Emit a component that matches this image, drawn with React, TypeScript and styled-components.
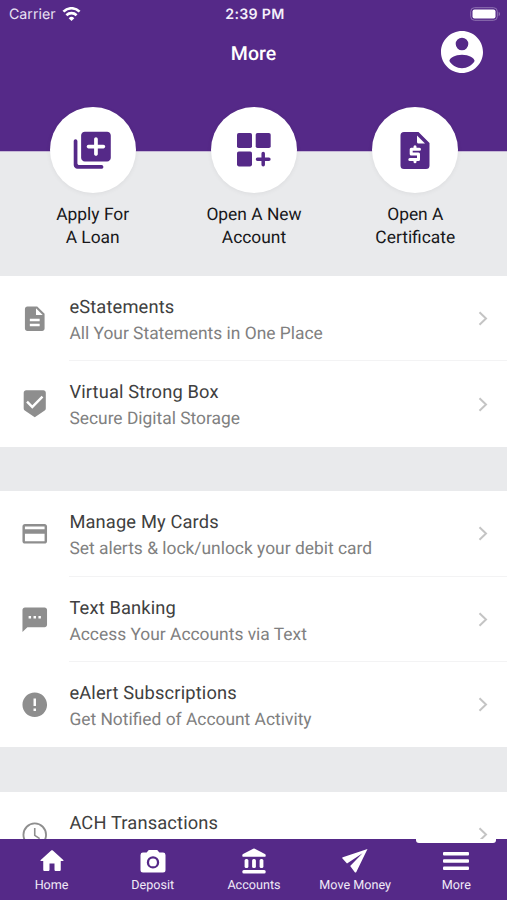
import React from "react";
import styled, { createGlobalStyle } from "styled-components";

const purple = "#552988";
const Global = createGlobalStyle`
  *{box-sizing:border-box}
  body{margin:0;background:#e9eaec;font-family:Roboto,sans-serif;overflow:hidden;text-rendering:geometricPrecision}
`;
const Screen = styled.div`
  width:507px;height:900px;display:flex;flex-direction:column;overflow:hidden;background:#e9eaec;
`;
const Top = styled.header`
  height:276px;flex:none;background:linear-gradient(${purple} 151px,#c6b8d6 151px,#c6b8d6 152px,#e9eaec 152px);display:flex;flex-direction:column;
`;
const StatusBar = styled.div`
  height:27px;display:grid;grid-template-columns:1fr auto 1fr;align-items:center;padding:0 6px 0 9px;
  font-family:Inter,sans-serif;font-size:14.2px;color:#e9e1f3;
`;
const Carrier = styled.div`display:flex;align-items:center;gap:6px;margin-top:1px;`;
const Clock = styled.div`font-weight:600;letter-spacing:.3px;color:#f4effa;margin-top:1px;`;
const Battery = styled.div`display:flex;justify-content:flex-end;`;
const NavBar = styled.div`
  height:50px;display:grid;grid-template-columns:1fr auto 1fr;align-items:center;padding:0 24px;
`;
const NavTitle = styled.h1`
  grid-column:2;margin:2px 0 0;font-size:19.5px;font-weight:500;color:#fff;
`;
const Profile = styled.div`display:flex;justify-content:flex-end;`;
const Quick = styled.div`
  display:grid;grid-template-columns:repeat(3,161.3px);justify-content:center;padding:30px 0 0 1px;
`;
const QuickItem = styled.div`display:flex;flex-direction:column;align-items:center;`;
const Circle = styled.div`
  width:86px;height:86px;border-radius:50%;background:#fff;display:grid;place-items:center;
  box-shadow:0 1px 5px rgba(0,0,0,.06);
`;
const QuickLabel = styled.div`
  margin-top:11px;font-size:17.4px;line-height:22.5px;text-align:center;color:#17171a;white-space:pre-line;
`;
const Group = styled.section`
  flex:none;background:#fff;margin-bottom:44.5px;
`;
const Row = styled.div`
  height:85.4px;display:grid;grid-template-columns:69.4px 1fr 38px;align-items:center;
`;
const RowIcon = styled.div`display:grid;place-items:center;height:85px;color:#8e8e8e;`;
const RowText = styled.div<{ $line: boolean }>`
  height:100%;padding-top:19px;margin-right:-38px;
  border-bottom:${p => (p.$line ? "1px solid #f3f3f4" : "0")};
`;
const RowTitle = styled.div`
  font-size:18.3px;line-height:26px;letter-spacing:.15px;color:#404040;white-space:nowrap;
`;
const RowSub = styled.div`
  font-size:17.4px;line-height:26px;color:#808080;white-space:nowrap;
`;
const Chevron = styled.div`display:flex;justify-content:flex-start;padding-left:9px;`;
const ListArea = styled.main`height:563px;flex:none;overflow:hidden;display:flex;flex-direction:column;`;
const Tabs = styled.nav`
  height:61px;flex:none;background:${purple};display:grid;grid-template-columns:repeat(5,101.2px);padding-left:1px;color:#fff;
`;
const Tab = styled.div<{ $active?: boolean }>`
  display:flex;flex-direction:column;align-items:center;padding-top:7px;position:relative;
  ${p => p.$active && `&::before{content:"";position:absolute;top:0;left:10.5px;width:80px;height:3.5px;background:#fff;border-radius:0 0 3px 3px;}`}
`;
const TabIcon = styled.div`height:30px;display:grid;place-items:center;`;
const TabLabel = styled.div`font-size:12.6px;line-height:19px;color:#f1eaf8;`;

const Icon = ({ d, size, children }: { d?: string; size: number; children?: React.ReactNode }) => (
  <svg width={size} height={size} viewBox="0 0 24 24" fill="currentColor">
    {d && <path d={d} fillRule="evenodd" />}
    {children}
  </svg>
);

const paths = {
  account: "M12 2C6.48 2 2 6.48 2 12s4.48 10 10 10 10-4.48 10-10S17.52 2 12 2zm0 3.2a3 3 0 1 1 0 6 3 3 0 0 1 0-6zm0 8.1c3.3 0 6 1.6 6 3-1.3 2.2-3.5 3.4-6 3.4s-4.7-1.2-6-3.4c0-1.4 2.7-3 6-3z",
  libraryAdd: "M3 6c-.55 0-1 .45-1 1v13c0 1.1.9 2 2 2h13c.55 0 1-.45 1-1s-.45-1-1-1H5c-.55 0-1-.45-1-1V7c0-.55-.45-1-1-1zM20 2H8c-1.1 0-2 .9-2 2v12c0 1.1.9 2 2 2h12c1.1 0 2-.9 2-2V4c0-1.1-.9-2-2-2zM18 11h-3v3c0 .55-.45 1-1 1s-1-.45-1-1v-3h-3c-.55 0-1-.45-1-1s.45-1 1-1h3V6c0-.55.45-1 1-1s1 .45 1 1v3h3c.55 0 1 .45 1 1s-.45 1-1 1z",
  doc: "M14 2H6c-1.1 0-1.99.9-1.99 2L4 20c0 1.1.89 2 1.99 2H18c1.1 0 2-.9 2-2V8l-6-6zm2 16H8v-2h8v2zm0-4H8v-2h8v2zm-3-5V3.5L18.5 9H13z",
  shield: "M19 1H5c-1.1 0-1.99.9-1.99 2L3 15.93c0 .69.35 1.3.88 1.66L12 23l8.11-5.41c.53-.36.88-.97.88-1.66L21 3c0-1.1-.9-2-2-2zm-9 15l-5-5 1.41-1.41L10 13.17l7.59-7.59L19 7l-9 9z",
  card: "M20 4H4c-1.11 0-1.99.89-1.99 2L2 18c0 1.11.89 2 2 2h16c1.11 0 2-.89 2-2V6c0-1.11-.89-2-2-2zm0 14H4v-6h16v6zm0-9.7H4V6h16v2.3z",
  sms: "M20 2H4c-1.1 0-1.99.9-1.99 2L2 22l4-4h14c1.1 0 2-.9 2-2V4c0-1.1-.9-2-2-2zM9 11H7V9h2v2zm4 0h-2V9h2v2zm4 0h-2V9h2v2z",
  alert: "M12 2C6.48 2 2 6.48 2 12s4.48 10 10 10 10-4.48 10-10S17.52 2 12 2zm1 15h-2v-2h2v2zm0-4h-2V7h2v6z",
  home: "M10 19v-5h4v5c0 .55.45 1 1 1h3c.55 0 1-.45 1-1v-7h1.7c.46 0 .68-.57.33-.87L12.67 3.6c-.38-.34-.96-.34-1.34 0l-8.36 7.53c-.34.3-.13.87.33.87H5v7c0 .55.45 1 1 1h3c.55 0 1-.45 1-1z",
};

const AddWidget = () => (
  <svg width="34" height="34" viewBox="0 0 34 34" fill={purple}>
    <rect x="0" y="0" width="15" height="15" rx="1.8" />
    <rect x="18.7" y="0" width="15" height="15" rx="1.8" />
    <rect x="0" y="18.4" width="15" height="15" rx="1.8" />
    <path d="M26.2 20.5v11.3M20.5 26.2h11.4" stroke={purple} strokeWidth="3.5" strokeLinecap="round" />
  </svg>
);
const MoneyDoc = () => (
  <svg width="30" height="37" viewBox="0 0 30 37" fill={purple}>
    <path fillRule="evenodd" d="M4 0h14.5L29.5 11v22.5a3.500 3.500 0 0 1-3.500 3.500H4a3.500 3.500 0 0 1-3.500-3.500v-30A3.500 3.500 0 0 1 4 0zM17 3.500v6.500a1.500 1.500 0 0 0 1.500 1.500H25z" />
    <path d="M19.500 17.300H11.200v4.700h7.300v5.500H9.800M15 14.800v2.500M15 27.500v2.300" fill="none" stroke="#fff" strokeWidth="3" strokeLinejoin="round" strokeLinecap="round" />
  </svg>
);
const Wifi = () => (
  <svg width="19" height="14" viewBox="0 0 18 14" fill="none" stroke="#fff" strokeWidth="2.6">
    <path d="M.9 4.6C5.500.1 12.500.1 17.100 4.600M3.900 8.200c2.900-2.800 7.300-2.800 10.200 0" />
    <path d="M9 14L6.200 11.200a4 4 0 0 1 5.600 0z" fill="#fff" stroke="none" />
  </svg>
);
const BatteryIcon = () => (
  <svg width="31" height="14" viewBox="0 0 31 14">
    <rect x=".7" y=".7" width="26.6" height="12.6" rx="3.8" fill="none" stroke="#8f73b2" strokeWidth="1" />
    <rect x="2.500" y="2.500" width="23" height="9" rx="2" fill="#fff" />
    <path d="M28.700 4.800c1.800.7 1.800 3.700 0 4.400z" fill="#8f73b2" />
  </svg>
);
const Camera = () => (
  <svg width="26" height="23" viewBox="0 0 26 23" fill="#fff">
    <path fillRule="evenodd" d="M8.800 0h8.400l2.200 2.600H23A2.500 2.500 0 0 1 25.500 5v15a2.500 2.500 0 0 1-2.500 2.500H3A2.500 2.500 0 0 1 .5 20V5A2.500 2.500 0 0 1 3 2.600h3.600zM13 6.200a6.200 6.200 0 1 0 0 12.400 6.200 6.200 0 0 0 0-12.400z" />
    <circle cx="13" cy="12.400" r="3.900" />
  </svg>
);
const Bank = () => (
  <svg width="24" height="26" viewBox="0 0 24 26" fill="#fff">
    <path d="M11.200.7a1.800 1.800 0 0 1 1.600 0L22.900 6c.5.300.8.700.8 1.200v.5c0 .6-.4 1-1 1H1.300c-.6 0-1-.4-1-1v-.5c0-.5.300-.9.800-1.200z" />
    <rect x="2.600" y="11" width="3.800" height="9" rx="1.500" />
    <rect x="10.100" y="11" width="3.800" height="9" rx="1.500" />
    <rect x="17.600" y="11" width="3.800" height="9" rx="1.500" />
    <rect x=".3" y="22" width="23.400" height="3.500" rx="1.500" />
  </svg>
);
const Plane = () => (
  <svg width="26" height="24" viewBox="0 0 26 24" fill="#fff">
    <path d="M25.500 0L.8 8.200c-.7.300-.7.800-.3 1.300l4.500 5L20.500 4.200 8.200 17l4.600 6.200c.5.600 1.200.5 1.500-.2z" />
  </svg>
);
const Bars = () => (
  <svg width="26" height="19" viewBox="0 0 26 19" fill="#fff">
    <rect width="26" height="3.400" rx="1" />
    <rect y="7.300" width="26" height="3.400" rx="1" />
    <rect y="14.600" width="26" height="3.400" rx="1" />
  </svg>
);
const ClockIcon = () => (
  <Icon size={29.5}>
    <circle cx="12" cy="12" r="9.200" fill="none" stroke="currentColor" strokeWidth="1.500" />
    <path d="M12 6.500v6l4 2.600" fill="none" stroke="currentColor" strokeWidth="1.300" />
  </Icon>
);

type Item = { icon: React.ReactNode; title: string; sub: string };
const rowIcon = (d: string) => <Icon size={29.5} d={d} />;
const groups: Item[][] = [
  [
    { icon: rowIcon(paths.doc), title: "eStatements", sub: "All Your Statements in One Place" },
    { icon: rowIcon(paths.shield), title: "Virtual Strong Box", sub: "Secure Digital Storage" },
  ],
  [
    { icon: rowIcon(paths.card), title: "Manage My Cards", sub: "Set alerts & lock/unlock your debit card" },
    { icon: rowIcon(paths.sms), title: "Text Banking", sub: "Access Your Accounts via Text" },
    { icon: rowIcon(paths.alert), title: "eAlert Subscriptions", sub: "Get Notified of Account Activity" },
  ],
  [{ icon: <ClockIcon />, title: "ACH Transactions", sub: "" }],
];
const QuickIcon = styled.div`display:grid;color:${purple};`;
const quick = [
  { icon: <Icon size={44.5} d={paths.libraryAdd} />, label: "Apply For\nA Loan" },
  { icon: <AddWidget />, label: "Open A New\nAccount" },
  { icon: <MoneyDoc />, label: "Open A\nCertificate" },
];
const tabs = [
  { icon: <Icon size={30} d={paths.home} />, label: "Home" },
  { icon: <Camera />, label: "Deposit" },
  { icon: <Bank />, label: "Accounts" },
  { icon: <Plane />, label: "Move Money" },
  { icon: <Bars />, label: "More", active: true },
];

export default function App() {
  return (
    <Screen>
      <Global />
      <Top>
        <StatusBar>
          <Carrier>Carrier <Wifi /></Carrier>
          <Clock>2:39 PM</Clock>
          <Battery><BatteryIcon /></Battery>
        </StatusBar>
        <NavBar>
          <span />
          <NavTitle>More</NavTitle>
          <Profile>
            <svg width="42" height="42" viewBox="2 2 20 20" fill="#fff"><path fillRule="evenodd" d={paths.account} /></svg>
          </Profile>
        </NavBar>
        <Quick>
          {quick.map(q => (
            <QuickItem key={q.label}>
              <Circle><QuickIcon>{q.icon}</QuickIcon></Circle>
              <QuickLabel>{q.label}</QuickLabel>
            </QuickItem>
          ))}
        </Quick>
      </Top>
      <ListArea>
        {groups.map((g, i) => (
          <Group key={i}>
            {g.map((r, j) => (
              <Row key={r.title}>
                <RowIcon>{r.icon}</RowIcon>
                <RowText $line={j < g.length - 1}>
                  <RowTitle>{r.title}</RowTitle>
                  <RowSub>{r.sub}</RowSub>
                </RowText>
                <Chevron>
                  <svg width="10" height="15" viewBox="0 0 10 15" fill="none" stroke="#c4c4c4" strokeWidth="2">
                    <path d="M1.500 1.200L8 7.500 1.500 13.800" />
                  </svg>
                </Chevron>
              </Row>
            ))}
          </Group>
        ))}
      </ListArea>
      <Tabs>
        {tabs.map(t => (
          <Tab key={t.label} $active={t.active}>
            <TabIcon>{t.icon}</TabIcon>
            <TabLabel>{t.label}</TabLabel>
          </Tab>
        ))}
      </Tabs>
    </Screen>
  );
}
